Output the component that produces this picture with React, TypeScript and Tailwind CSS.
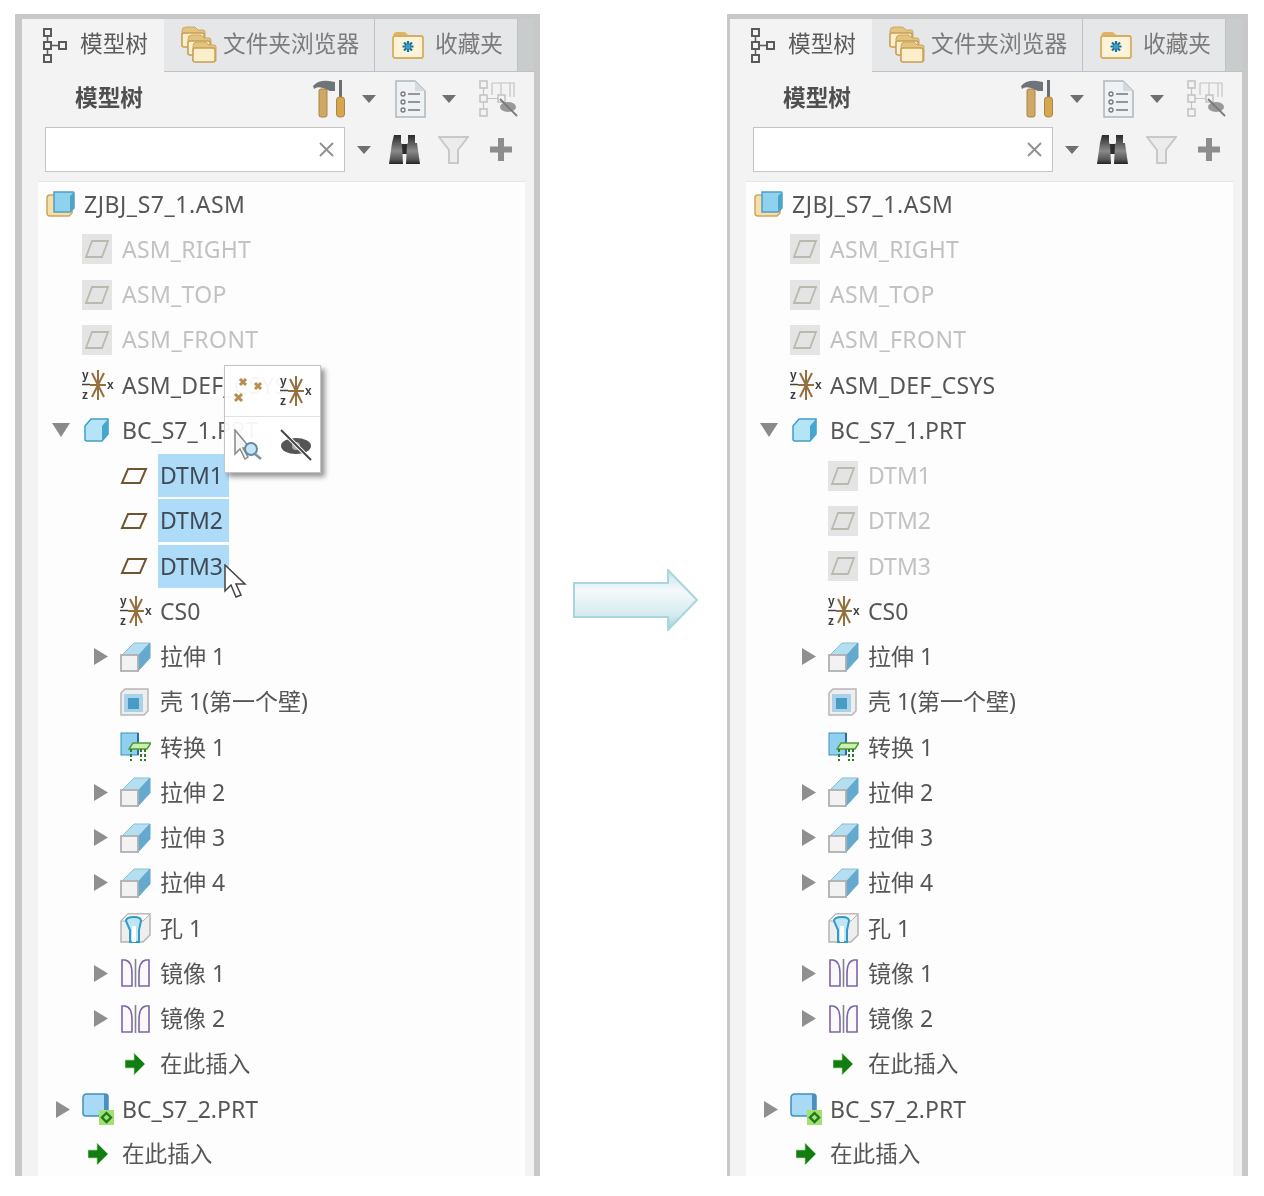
import React from "react";

const Tri = ({ dir = "down", c = "#6f6f6f", w = 14, h = 8 }: { dir?: string; c?: string; w?: number; h?: number }) => (
  <svg width={w} height={h} viewBox={`0 0 ${w} ${h}`} className="shrink-0">
    {dir === "down" ? <polygon points={`0,0 ${w},0 ${w / 2},${h}`} fill={c} /> : <polygon points={`0,0 ${w},${h / 2} 0,${h}`} fill={c} />}
  </svg>
);

const TreeTabIcon = () => (
  <svg width="26" height="36" viewBox="0 0 26 36" fill="none" stroke="#5a5a5a" strokeWidth="2" className="shrink-0">
    <rect x="2" y="1" width="7" height="7" />
    <rect x="2" y="14" width="7" height="7" />
    <rect x="2" y="27" width="7" height="7" />
    <rect x="17" y="14" width="7" height="7" />
    <path d="M5.500 8v6M5.500 21v6M9 17.500h8" strokeWidth="1.500" />
  </svg>
);

const Folder = ({ x, y }: { x: number; y: number }) => (
  <g transform={`translate(${x} ${y})`}>
    <path d="M1 5q0-4 4-4h9l3 3h5q2 0 2 2v14H1z" fill="#e3c47e" stroke="#c9a866" />
    <rect x="1" y="7" width="22" height="14" rx="2" fill="#fbeecb" stroke="#c79f56" strokeWidth="1.500" />
  </g>
);

const FoldersIcon = () => (
  <svg width="36" height="38" viewBox="0 0 36 38" className="shrink-0">
    <Folder x={0} y={0} />
    <Folder x={6} y={8} />
    <Folder x={11} y={15} />
  </svg>
);

const FavIcon = () => (
  <svg width="32" height="28" viewBox="0 0 32 28" className="shrink-0">
    <path d="M1 6q0-5 4-5h8l4 4h10q3 0 3 3v4H1z" fill="#e0b468" />
    <rect x="1" y="5" width="30" height="22" rx="2" fill="#fdf3d8" stroke="#d9ad5f" strokeWidth="1.800" />
    <g stroke="#1d6f9e" strokeWidth="2.200">
      <path d="M16 10v11M10.500 15.500h11M12 11.500l8 8M20 11.500l-8 8" />
    </g>
    <circle cx="16" cy="15.500" r="2.500" fill="#37a0c8" />
  </svg>
);

const ToolsIcon = () => (
  <svg width="33" height="38" viewBox="0 0 33 38" className="shrink-0">
    <path d="M0 6q5-6 16-5l6 1v9h-5l-7-3q-6-2-9 1z" fill="#6f7478" />
    <rect x="6" y="9" width="8" height="28" rx="2" fill="#cfa866" stroke="#a88548" />
    <rect x="26" y="0" width="3" height="18" fill="#6b6f72" />
    <rect x="23.500" y="17" width="8" height="20" rx="3" fill="#d6a84e" stroke="#a88548" />
  </svg>
);

const DocIcon = () => (
  <svg width="31" height="38" viewBox="0 0 31 38" className="shrink-0">
    <path d="M1 1h19l10 10v26H1z" fill="#eef2f5" stroke="#aeb6bb" strokeWidth="1.500" />
    <path d="M20 1v10h10z" fill="#d4dbe0" />
    <g fill="none" stroke="#777" strokeWidth="1.300">
      <circle cx="8" cy="14" r="2" />
      <circle cx="8" cy="22" r="2" />
      <circle cx="8" cy="30" r="2" />
    </g>
    <path d="M13 14h12M13 22h12M13 30h12" stroke="#777" strokeWidth="1.600" />
  </svg>
);

const TreeEyeIcon = () => (
  <svg width="39" height="38" viewBox="0 0 39 38" fill="none" className="shrink-0">
    <g stroke="#c4c4c4" strokeWidth="1.600">
      <rect x="1" y="1" width="7" height="7" />
      <rect x="1" y="15" width="7" height="7" />
      <rect x="1" y="29" width="7" height="7" />
      <rect x="19" y="15" width="7" height="7" />
      <path d="M4.500 8v7M4.500 22v7M8 18.500h11M13 3h22v14M22 3v12M31 3v14M13 3v12" strokeWidth="1.200" />
    </g>
    <ellipse cx="29" cy="27" rx="8" ry="5" fill="#999" />
    <path d="M21 19l17 17" stroke="#7a7a7a" strokeWidth="1.800" />
  </svg>
);

const Binoculars = () => (
  <svg width="31" height="30" viewBox="0 0 31 30" className="shrink-0">
    <defs>
      <linearGradient id="bin" x1="0" x2="0" y1="0" y2="1">
        <stop offset="0" stopColor="#2a2a2a" />
        <stop offset="0.55" stopColor="#8a8a8a" />
        <stop offset="0.85" stopColor="#555" />
        <stop offset="1" stopColor="#222" />
      </linearGradient>
    </defs>
    <rect x="12" y="9" width="7" height="10" fill="#2c2c2c" />
    <path d="M5 0h7v8l1 1 1 20H0l3-21z" fill="url(#bin)" />
    <path d="M19 0h7v8l2 0 3 21H17l1-20 1-1z" fill="url(#bin)" />
  </svg>
);

const Funnel = () => (
  <svg width="31" height="28" viewBox="0 0 31 28" className="shrink-0">
    <path d="M1 1h29L20 14v13h-9V14z" fill="#ececec" stroke="#c8c8c8" strokeWidth="2" />
  </svg>
);

const PlusIcon = () => (
  <svg width="22" height="23" viewBox="0 0 22 23" className="shrink-0">
    <path d="M8 0h6v8.500h8v6h-8V23H8v-8.500H0v-6h8z" fill="#8d8d8d" />
  </svg>
);

const Datum = ({ off }: { off?: boolean }) =>
  off ? (
    <span className="flex h-[30px] w-[30px] items-center justify-center bg-[#e4e4e4]">
      <svg width="26" height="20" viewBox="0 0 26 20" fill="none">
        <path d="M8 2h16l-6 16H2z" stroke="#b9b9ae" strokeWidth="1.800" />
      </svg>
    </span>
  ) : (
    <svg width="28" height="18" viewBox="0 0 28 18" fill="none">
      <path d="M8 2h18l-6 14H2z" stroke="#6f5630" strokeWidth="2" />
    </svg>
  );

const Csys = () => (
  <svg width="32" height="32" viewBox="0 0 32 32" className="shrink-0">
    <g stroke="#94703f" strokeWidth="2">
      <path d="M16 1v30M10 4l12 24M22 4L10 28M8 16h16" />
    </g>
    <text x="0" y="10" fontSize="12" fontWeight="700" fill="#3d3d3d" fontFamily="Liberation Sans, sans-serif">y</text>
    <text x="0" y="30" fontSize="12" fontWeight="700" fill="#3d3d3d" fontFamily="Liberation Sans, sans-serif">z</text>
    <text x="25" y="20" fontSize="12" fontWeight="700" fill="#3d3d3d" fontFamily="Liberation Sans, sans-serif">x</text>
    <path d="M0 15.500h8" stroke="#444" strokeWidth="1.500" />
  </svg>
);

const AsmIcon = () => (
  <svg width="29" height="26" viewBox="0 0 29 26">
    <path d="M1 7q0-3 3-3h22v18l-3 3H4q-3 0-3-3z" fill="#f6dfa9" stroke="#cfa75c" strokeWidth="1.500" />
    <path d="M8 1h19a1 1 0 011 1v15l-4 4H8z" fill="#8fd2ee" stroke="#4f9fc5" strokeWidth="1.500" />
    <path d="M24 5l4-4v16l-4 4z" fill="#4ea3c9" />
  </svg>
);

const PartIcon = () => (
  <svg width="25" height="24" viewBox="0 0 25 24" className="ml-[2px]">
    <path d="M1 8l6-7h17v15l-6 7H3q-2 0-2-2z" fill="#b5e4f7" stroke="#3f9ec7" strokeWidth="1.500" />
    <path d="M18 8l6-7v15l-6 7z" fill="#45a6d0" />
  </svg>
);

const Part2Icon = () => (
  <svg width="32" height="32" viewBox="0 0 32 32">
    <path d="M1 5q0-4 4-4h18q3 0 3 3v16q0 3-3 3H4q-3 0-3-3z" fill="#a8daf5" stroke="#3f8fc0" strokeWidth="1.500" />
    <path d="M22 1h2q2 0 2 3v16l-4 3z" fill="#4a8fbd" />
    <rect x="17" y="17" width="15" height="15" fill="#a4e070" />
    <path d="M24.500 20l4.500 4.500-4.500 4.500-4.500-4.500z" fill="none" stroke="#1d7a22" strokeWidth="2.400" />
  </svg>
);

const Extrude = () => (
  <svg width="31" height="30" viewBox="0 0 31 30">
    <path d="M14 1h16L18 14H1z" fill="#b6def1" stroke="#86bfd8" />
    <path d="M30 1v15L18 29V14z" fill="#63aace" stroke="#63aace" />
    <rect x="1" y="13" width="17" height="16" fill="#f2f2f2" stroke="#b0b0b0" strokeWidth="1.800" />
  </svg>
);

const Shell = () => (
  <svg width="29" height="28" viewBox="0 0 29 28">
    <path d="M1 5l4-4h23v22l-4 4H1z" fill="#eeeeee" stroke="#b7b7b7" strokeWidth="1.500" />
    <rect x="4" y="6" width="19" height="18" fill="#a9d2e8" />
    <rect x="8" y="10" width="11" height="11" fill="#4a9ac6" />
  </svg>
);

const Transform = () => (
  <svg width="31" height="30" viewBox="0 0 31 30">
    <rect x="1" y="1" width="17" height="22" fill="#8fd0f0" stroke="#3f8fc0" />
    <path d="M18 1v22" stroke="#2d6f99" strokeWidth="2" />
    <path d="M13 11h18l-4 6H9z" fill="#cdeeb0" stroke="#4c9a33" strokeWidth="1.400" />
    <path d="M11 17v12M21 17v12M25 17v12" stroke="#2f7d2a" strokeWidth="2" strokeDasharray="3 2" />
  </svg>
);

const Hole = () => (
  <svg width="31" height="30" viewBox="0 0 31 30">
    <path d="M1 8l7-7h22v21l-7 7H1z" fill="#eeeeee" stroke="#b4b4b4" strokeWidth="1.500" />
    <path d="M8 1h22l-7 7H1z" fill="#fafafa" stroke="#b4b4b4" />
    <path d="M6 8q0-4 8-4 7 0 7 4l-2 9v12h-9V17z" fill="#bfe6f5" stroke="#2f9bc7" strokeWidth="2" />
    <path d="M12 13h4v16h-4z" fill="#fff" />
  </svg>
);

const Mirror = () => (
  <svg width="29" height="28" viewBox="0 0 29 28" fill="#fbf8fe" stroke="#7d64a5" strokeWidth="1.600" className="ml-[1px]">
    <path d="M1 1h3q7 1 7 14v12H1z" />
    <path d="M28 1h-3q-7 1-7 14v12h10z" />
    <path d="M14.500 0v28" stroke="#7f848c" />
  </svg>
);

const GreenArrow = () => (
  <svg width="20" height="22" viewBox="0 0 20 22">
    <path d="M0 7h9V0l11 11-11 11v-7H0z" fill="#127d12" stroke="#a9dc8c" strokeWidth="0.700" />
  </svg>
);

const Popup = () => (
  <div className="absolute left-[186px] top-[183px] grid w-[97px] grid-cols-2 border border-[#c4c4c4] bg-white/95 shadow-[4px_4px_5px_rgba(0,0,0,0.4)]">
    <div className="flex h-[51px] items-center justify-center border-b border-[#e2e2e2]">
      <svg width="32" height="28" viewBox="0 0 32 28" stroke="#b58f4f" strokeWidth="3">
        <path d="M7 2l6 6M13 2L7 8M22 6l6 6M28 6l-6 6M2 17l7 7M9 17l-7 7" />
      </svg>
    </div>
    <div className="flex h-[51px] items-center justify-center border-b border-[#e2e2e2]">
      <Csys />
    </div>
    <div className="flex h-[55px] items-center justify-center">
      <svg width="32" height="32" viewBox="0 0 32 32" fill="none">
        <path d="M2 1v24l5-5 5 10 3-2-5-9h7z" fill="#f6f6f6" stroke="#888" strokeWidth="1.500" />
        <circle cx="18" cy="20" r="6" fill="#c6e4f4" stroke="#5f8aa0" strokeWidth="2" />
        <path d="M22 25l6 5" stroke="#7c96a6" strokeWidth="2.600" />
      </svg>
    </div>
    <div className="flex h-[55px] items-center justify-center">
      <svg width="32" height="34" viewBox="0 0 32 34" fill="none">
        <ellipse cx="16" cy="18" rx="15" ry="8" fill="#555" />
        <circle cx="16" cy="18" r="4" fill="#aaa" />
        <path d="M1 2l30 30" stroke="#fff" strokeWidth="4" />
        <path d="M1 2l30 30" stroke="#444" strokeWidth="2" />
      </svg>
    </div>
  </div>
);

type Row = {
  label: string;
  depth: number;
  icon: React.ReactNode;
  arrow?: "down" | "right";
  off?: boolean;
  sel?: boolean;
  extra?: string;
};

const rowsFor = (left: boolean): Row[] => [
  { label: "ZJBJ_S7_1.ASM", depth: 0, icon: <AsmIcon />, extra: "tracking-[0.55px]" },
  { label: "ASM_RIGHT", depth: 1, icon: <Datum off />, off: true, extra: "tracking-[0.2px]" },
  { label: "ASM_TOP", depth: 1, icon: <Datum off />, off: true, extra: "tracking-[0.3px]" },
  { label: "ASM_FRONT", depth: 1, icon: <Datum off />, off: true, extra: "tracking-[0.4px]" },
  { label: "ASM_DEF_CSYS", depth: 1, icon: <Csys />, extra: "tracking-[0.2px]" },
  { label: "BC_S7_1.PRT", depth: 1, icon: <PartIcon />, arrow: "down" },
  { label: "DTM1", depth: 2, icon: left ? <Datum /> : <Datum off />, off: !left, sel: left },
  { label: "DTM2", depth: 2, icon: left ? <Datum /> : <Datum off />, off: !left, sel: left },
  { label: "DTM3", depth: 2, icon: left ? <Datum /> : <Datum off />, off: !left, sel: left },
  { label: "CS0", depth: 2, icon: <Csys /> },
  { label: "拉伸 1", depth: 2, icon: <Extrude />, arrow: "right" },
  { label: "壳 1(第一个壁)", depth: 2, icon: <Shell /> },
  { label: "转换 1", depth: 2, icon: <Transform /> },
  { label: "拉伸 2", depth: 2, icon: <Extrude />, arrow: "right" },
  { label: "拉伸 3", depth: 2, icon: <Extrude />, arrow: "right" },
  { label: "拉伸 4", depth: 2, icon: <Extrude />, arrow: "right" },
  { label: "孔 1", depth: 2, icon: <Hole /> },
  { label: "镜像 1", depth: 2, icon: <Mirror />, arrow: "right" },
  { label: "镜像 2", depth: 2, icon: <Mirror />, arrow: "right" },
  { label: "在此插入", depth: 2, icon: <span className="ml-[5px] block"><GreenArrow /></span>, extra: "text-[22.600px]" },
  { label: "BC_S7_2.PRT", depth: 1, icon: <Part2Icon />, arrow: "right" },
  { label: "在此插入", depth: 1, icon: <span className="ml-[6px] block"><GreenArrow /></span>, extra: "text-[22.600px]" },
];

const TreeRow = ({ row }: { row: Row }) => (
  <div className={`flex h-[45.25px] items-center ${row.depth === 0 ? "pl-[8px]" : row.depth === 1 ? "pl-[6px]" : "pl-[44px]"}`}>
    {row.depth > 0 && (
      <span className="flex w-[38px] shrink-0 items-center justify-center">
        {row.arrow === "down" && <span className="-ml-[4px] block"><Tri dir="down" c="#8a8a8a" w={18} h={14} /></span>}
        {row.arrow === "right" && <Tri dir="right" c="#8f8f8f" w={14} h={17} />}
      </span>
    )}
    <span className={`flex shrink-0 items-center ${row.depth === 0 ? "w-[36px]" : "w-[38px]"}`}>{row.icon}</span>
    <span
      className={`flex h-[43px] items-center whitespace-nowrap px-[2px] ${row.extra ?? ""} ${row.sel ? "w-[71px] bg-[#aedcf8] text-[#3f4a55]" : ""} ${
        row.off ? "text-[#c2c2c2]" : row.sel ? "" : "text-[#565656]"
      }`}
    >
      {row.label}
    </span>
  </div>
);

const Tab = ({ w, icon, label, active, offset, gap }: { w: string; icon: React.ReactNode; label: string; active?: boolean; offset: string; gap: string }) => (
  <div
    className={`flex h-full items-center ${w} ${offset} ${gap} ${
      active ? "bg-[#f3f3f3] text-[#5a5a5a]" : "border-b border-r border-[#bfc2c4] bg-[#e6e7e9] text-[#7b7b7b]"
    }`}
  >
    {icon}
    <span className="whitespace-nowrap pb-[2px] text-[22.700px]">{label}</span>
  </div>
);

const Panel = ({ left }: { left?: boolean }) => (
  <div className={`mt-[14px] flex h-[1162px] shrink-0 flex-col border-t-[5px] border-r-[6px] border-[#c8c8c8] bg-[#f3f3f3] ${left ? "w-[525px] border-l-[7px]" : "w-[521px] border-l-[3px]"}`}>
    <div className="flex h-[53px] shrink-0">
      <Tab w="w-[142px]" offset="pl-[20px]" gap="gap-[12px]" active icon={<TreeTabIcon />} label="模型树" />
      <Tab w="w-[211px]" offset="pl-[17px]" gap="gap-[6px]" icon={<FoldersIcon />} label="文件夹浏览器" />
      <Tab w="w-[143px]" offset="pl-[17px]" gap="gap-[11px]" icon={<FavIcon />} label="收藏夹" />
      <div className="flex-1 border-b border-[#bfc2c4] bg-[#c9cccd]" />
    </div>
    <div className="flex h-[54px] shrink-0 items-center pl-[53px] pr-[16px]">
      <span className="pb-[1px] text-[22.700px] font-semibold text-[#4f4f4f]">模型树</span>
      <div className="flex-1" />
      <ToolsIcon />
      <span className="ml-[16px]"><Tri /></span>
      <span className="ml-[19px]"><DocIcon /></span>
      <span className="ml-[16px]"><Tri /></span>
      <span className="ml-[23px]"><TreeEyeIcon /></span>
    </div>
    <div className="flex h-[55px] shrink-0 items-center pb-[8px] pl-[23px]">
      <div className="flex h-[45px] w-[300px] items-center justify-end border border-[#c4c4c4] bg-white pr-[9px]">
        <svg width="17" height="17" viewBox="0 0 17 17" stroke="#8f8f8f" strokeWidth="1.800">
          <path d="M2 2l13 13M15 2L2 15" />
        </svg>
      </div>
      <span className="ml-[12px]"><Tri /></span>
      <span className="ml-[18px]"><Binoculars /></span>
      <span className="ml-[18px]"><Funnel /></span>
      <span className="ml-[21px]"><PlusIcon /></span>
    </div>
    <div className="relative ml-[16px] mr-[9px] flex-1 border-t border-[#e6e6e6] bg-[#fdfdfd] text-[23px]">
      <div className="-mt-[0.5px]">
        {rowsFor(!!left).map((r, i) => (
          <TreeRow key={i} row={r} />
        ))}
      </div>
      {left && <Popup />}
    </div>
  </div>
);

const BigArrow = () => (
  <svg width="126" height="62" viewBox="0 0 126 62">
    <defs>
      <linearGradient id="bigArrow" x1="0" x2="0" y1="0" y2="1">
        <stop offset="0" stopColor="#c5e3ea" />
        <stop offset="0.35" stopColor="#f4f9fb" />
        <stop offset="0.75" stopColor="#d4ebef" />
        <stop offset="1" stopColor="#9fcfd8" />
      </linearGradient>
    </defs>
    <path d="M1 14h94V1l29 30-29 30V48H1z" fill="url(#bigArrow)" stroke="#a9d5de" strokeWidth="2" />
  </svg>
);

export default function App() {
  return (
    <div className="flex h-[1196px] w-[1264px] items-start overflow-hidden bg-white pl-[15px] text-[23px] leading-none blur-[0.4px]" style={{ fontFamily: '"Noto Sans", "Noto Sans CJK SC", sans-serif' }}>
      <div className="relative">
        <Panel left />
        <div className="absolute left-[209px] top-[564px]">
          <svg width="26" height="38" viewBox="0 0 26 38">
            <path d="M1 1v26l6-6 5 12 5-2-5-11h9z" fill="#fff" stroke="#444" strokeWidth="1.500" />
          </svg>
        </div>
      </div>
      <div className="w-[187px] shrink-0 pl-[33px] pt-[569px]">
        <BigArrow />
      </div>
      <Panel />
    </div>
  );
}
